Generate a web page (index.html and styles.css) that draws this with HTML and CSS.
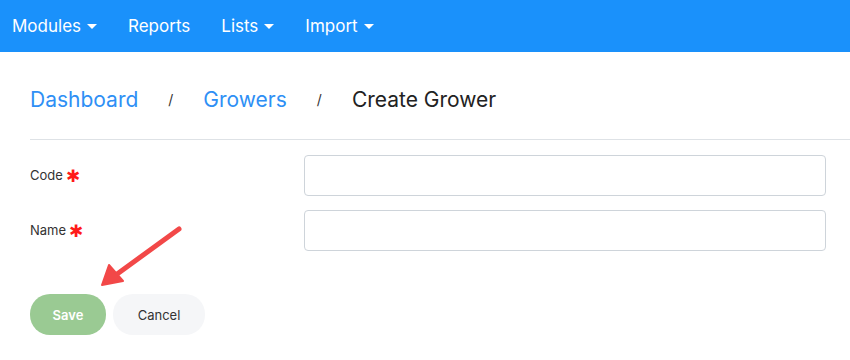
FILE: index.html
```html
<!DOCTYPE html>
<html lang="en">
<head>
    <meta charset="UTF-8">
    <meta name="viewport" content="width=device-width, initial-scale=1.0">
    <title>Create Grower</title>
    <link rel="stylesheet" href="styles.css">
</head>
<body>
    <nav class="navbar">
        <a class="nav-link dropdown">Modules</a>
        <a class="nav-link">Reports</a>
        <a class="nav-link dropdown">Lists</a>
        <a class="nav-link dropdown">Import</a>
    </nav>

    <div class="page">
        <div class="breadcrumb">
            <a class="crumb">Dashboard</a>
            <span class="sep">/</span>
            <a class="crumb">Growers</a>
            <span class="sep">/</span>
            <span class="crumb current">Create Grower</span>
        </div>

        <form class="grower-form">
            <div class="form-row">
                <label class="form-label">Code<span class="req">&#10033;</span></label>
                <input type="text" class="form-input">
            </div>
            <div class="form-row">
                <label class="form-label">Name<span class="req">&#10033;</span></label>
                <input type="text" class="form-input">
            </div>

            <div class="actions">
                <button type="button" class="btn btn-save">Save</button>
                <button type="button" class="btn btn-cancel">Cancel</button>
            </div>
        </form>

        <!-- annotation arrow pointing at Save -->
        <svg class="arrow" width="90" height="70" viewBox="0 0 90 70">
            <line x1="82" y1="6" x2="16" y2="54" stroke="#f24848" stroke-width="5" stroke-linecap="round"/>
            <polygon points="5,62 12,42 26,58" fill="#f24848" stroke="#f24848" stroke-width="2" stroke-linejoin="round"/>
        </svg>
    </div>
</body>
</html>
```

FILE: styles.css
```css
* {
    margin: 0;
    padding: 0;
    box-sizing: border-box;
}

body {
    font-family: Inter, "Noto Sans", Arial, sans-serif;
    background: #fff;
    color: #333;
}

.navbar {
    display: flex;
    align-items: center;
    height: 52px;
    background: #1a91fb;
    padding-left: 12px;
    gap: 31px;
}

.nav-link {
    color: #fff;
    font-size: 17px;
    text-decoration: none;
}

.dropdown::after {
    content: "";
    display: inline-block;
    margin-left: 6px;
    vertical-align: 3px;
    border-top: 5px solid #fff;
    border-left: 5px solid transparent;
    border-right: 5px solid transparent;
}

.page {
    position: relative;
    padding-left: 30px;
}

.breadcrumb {
    display: flex;
    align-items: center;
    height: 88px;
    padding-top: 8px;
    border-bottom: 1px solid #dee2e6;
    font-size: 21px;
}

.crumb {
    color: #2e8ff5;
    text-decoration: none;
}

.crumb.current {
    color: #222;
}

.sep {
    font-size: 14px;
    color: #333;
    margin: 0 30px;
}

.grower-form {
    padding-top: 15px;
}

.form-row {
    display: flex;
    align-items: center;
    margin-bottom: 14px;
}

.form-label {
    width: 274px;
    font-size: 13px;
    color: #333;
}

.req {
    color: #ff1a1a;
    font-size: 17px;
    margin-left: 3px;
    vertical-align: -2px;
}

.form-input {
    width: 522px;
    height: 41px;
    border: 1px solid #ced4da;
    border-radius: 4px;
    outline: none;
}

.actions {
    display: flex;
    gap: 7px;
    margin-top: 43px;
}

.btn {
    height: 41px;
    border: none;
    border-radius: 20px;
    font-family: inherit;
    font-size: 13px;
    cursor: pointer;
}

.btn-save {
    width: 76px;
    background: #9aca93;
    color: #fff;
    font-weight: 600;
}

.btn-cancel {
    width: 92px;
    background: #f5f6f8;
    color: #333;
}

.arrow {
    position: absolute;
    left: 97px;
    top: 171px;
}
```
